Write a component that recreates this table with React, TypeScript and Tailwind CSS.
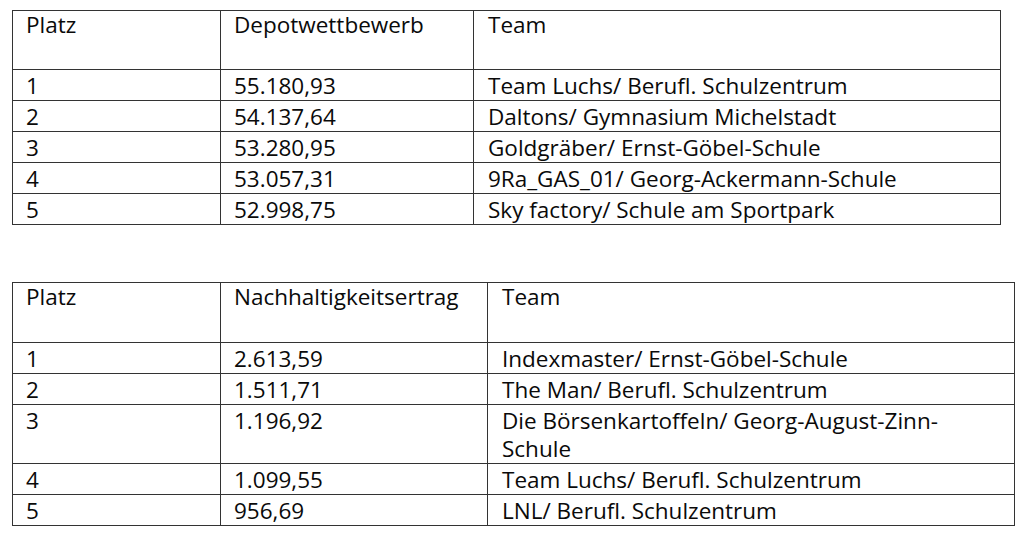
import { Fragment } from "react";

const depot = [
  ["1", "55.180,93", "Team Luchs/ Berufl. Schulzentrum"],
  ["2", "54.137,64", "Daltons/ Gymnasium Michelstadt"],
  ["3", "53.280,95", "Goldgräber/ Ernst-Göbel-Schule"],
  ["4", "53.057,31", "9Ra_GAS_01/ Georg-Ackermann-Schule"],
  ["5", "52.998,75", "Sky factory/ Schule am Sportpark"],
];

const nachhaltig = [
  ["1", "2.613,59", "Indexmaster/ Ernst-Göbel-Schule"],
  ["2", "1.511,71", "The Man/ Berufl. Schulzentrum"],
  ["3", "1.196,92", "Die Börsenkartoffeln/ Georg-August-Zinn-|Schule"],
  ["4", "1.099,55", "Team Luchs/ Berufl. Schulzentrum"],
  ["5", "956,69", "LNL/ Berufl. Schulzentrum"],
];

function RankTable({
  title,
  rows,
  cols,
  width,
  head,
}: {
  title: string;
  rows: string[][];
  cols: string;
  width: string;
  head: string;
}) {
  return (
    <div className={`${width} border border-[#333]`}>
      <div className={`grid ${cols} ${head} border-b border-[#333]`}>
        <div className="pl-[13px]">Platz</div>
        <div className="border-l border-[#333] pl-[13px]">{title}</div>
        <div className="border-l border-[#333] pl-[14px]">Team</div>
      </div>
      {rows.map((r, i) => {
        const lines = r[2].split("|");
        const last = i === rows.length - 1;
        return (
          <div
            key={r[0]}
            className={`grid ${cols} ${lines.length > 1 ? "h-[59px]" : last ? "h-[30px]" : "h-[31px]"} ${last ? "" : "border-b border-[#333]"}`}
          >
            <div className="pl-[13px] pt-[2px]">{r[0]}</div>
            <div className="border-l border-[#333] pl-[13px] pt-[2px]">{r[1]}</div>
            <div className="border-l border-[#333] pl-[14px] pt-[2px] leading-[28px]">
              {lines.map((l, j) => (
                <Fragment key={j}>
                  {j > 0 && <br />}
                  {l}
                </Fragment>
              ))}
            </div>
          </div>
        );
      })}
    </div>
  );
}

export default function App() {
  return (
    <div className="min-h-[535px] w-[1024px] bg-white pl-[12px] pt-[10px] font-['Open_Sans',sans-serif] text-[22.5px] font-[500] leading-[28px] text-[#0a0a0a]">
      <RankTable
        title="Depotwettbewerb"
        rows={depot}
        cols="grid-cols-[207px_253px_1fr]"
        width="w-[989px]"
        head="h-[59px]"
      />
      <div className="h-[57px]" />
      <RankTable
        title="Nachhaltigkeitsertrag"
        rows={nachhaltig}
        cols="grid-cols-[207px_267px_1fr]"
        width="w-[1003px]"
        head="h-[60px]"
      />
    </div>
  );
}
